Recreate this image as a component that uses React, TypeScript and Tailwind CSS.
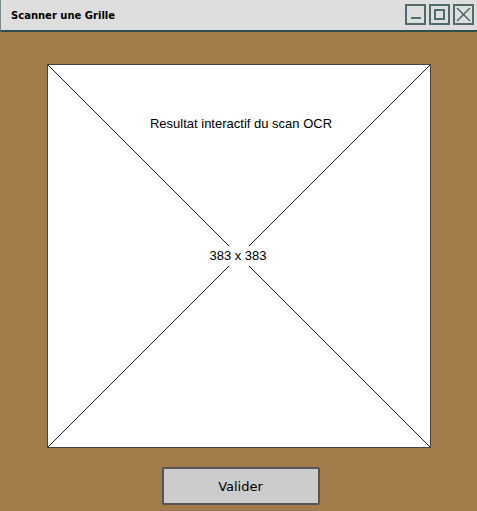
import React from 'react';

export default function App() {
  return (
    <div className="w-[477px] h-[511px] flex flex-col bg-[#a47c4b] overflow-hidden">
      {/* Title bar */}
      <div className="h-[32px] flex items-center justify-between bg-[#dedede] border-b-2 border-[#2f4f4f] border-l border-l-[#7a8a8a] pl-[10px] pr-[3px] shrink-0">
        <span className="text-[10px] font-bold text-black [font-family:'Comic_Sans_MS','DejaVu_Sans',sans-serif]">
          Scanner une Grille
        </span>
        <div className="flex items-center gap-[3px] mt-[-2px]">
          <div className="w-[21px] h-[21px] border-2 border-[#4f6b6b] flex items-end justify-center pb-[4px]">
            <div className="w-[10px] h-[2px] bg-[#4f6b6b]" />
          </div>
          <div className="w-[21px] h-[21px] border-2 border-[#4f6b6b] flex items-center justify-center">
            <div className="w-[11px] h-[11px] border-2 border-[#4f6b6b]" />
          </div>
          <div className="w-[21px] h-[21px] border-2 border-[#4f6b6b] flex items-center justify-center">
            <svg width="15" height="15" viewBox="0 0 15 15">
              <path d="M1 1 L14 14 M14 1 L1 14" stroke="#3f5b5b" strokeWidth="1.3" />
            </svg>
          </div>
        </div>
      </div>

      {/* Body */}
      <div className="flex flex-col items-center pt-[32px]">
        <div className="relative w-[384px] h-[384px] bg-white border border-[#444] ml-[1px]">
          <svg className="absolute inset-0 w-full h-full" viewBox="0 0 382 382" preserveAspectRatio="none">
            <path d="M0 0 L382 382 M382 0 L0 382" stroke="#222" strokeWidth="1" />
          </svg>
          <div className="absolute left-0 right-0 top-[49px] flex justify-center pl-[4px]">
            <span className="text-[13px] text-black [font-family:'Liberation_Sans',Arial,sans-serif]">
              Resultat interactif du scan OCR
            </span>
          </div>
          <div className="absolute inset-0 flex items-center justify-center pr-[2px]">
            <span className="bg-white px-[1px] text-[13px] text-black [font-family:'Liberation_Sans',Arial,sans-serif]">
              383 x 383
            </span>
          </div>
        </div>

        <button className="mt-[19px] ml-[4px] w-[158px] h-[38px] pt-[2px] bg-[#cccccc] border-2 border-[#555] rounded-[2px] text-[13px] text-black [font-family:'Comic_Sans_MS','DejaVu_Sans',sans-serif]">
          Valider
        </button>
      </div>
    </div>
  );
}
